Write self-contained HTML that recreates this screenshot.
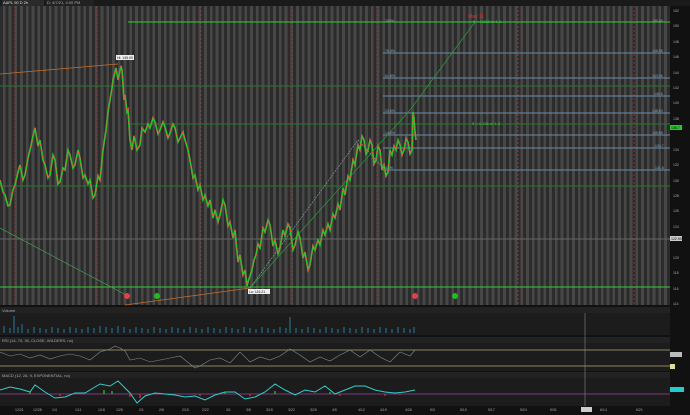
<!DOCTYPE html>
<html><head><meta charset="utf-8"><style>
*{margin:0;padding:0;box-sizing:border-box}
body{width:690px;height:415px;background:#111;overflow:hidden;font-family:"Liberation Sans",sans-serif;position:relative}
.abs{position:absolute}
.stripes{background:repeating-linear-gradient(90deg,#2b2b2b 0,#2b2b2b 3px,#474747 3px,#474747 5.75px)}
</style></head><body>
<div class="abs" style="left:0;top:0;width:690px;height:6px;background:#1a1a1a"></div>
<div class="abs" style="left:2px;top:0;width:42px;height:6px;background:#2a2a2a;color:#ddd;font-size:4px;line-height:6px;padding-left:1px">AAPL 90 D 2h [NASDAQ]</div>
<div class="abs" style="left:46px;top:0;width:48px;height:6px;background:#222;color:#aaa;font-size:4px;line-height:6px;padding-left:1px">D: 4/7/21, 4:00 PM</div>
<div class="abs stripes" style="left:0;top:6px;width:670px;height:299px"></div>
<div class="abs" style="left:670px;top:6px;width:20px;height:409px;background:#111"></div>
<svg class="abs" style="left:0;top:0" width="690" height="415">
<defs>
<polyline id="p" points="0,180 3,192 5,195 8,206 10,205 13,190 15,185 18,172 20,165 23,180 25,175 28,158 30,150 33,136 35,128 38,146 40,140 43,160 45,165 48,178 50,175 53,155 55,160 58,184 60,182 63,168 65,170 68,150 70,155 73,168 75,165 78,150 80,158 83,178 85,175 88,184 90,180 93,198 95,195 98,176 100,180 103,150 106,130 108,112 110,100 112,88 113,80 115,72 116,68 118,80 119,75 121,66 122,70 124,100 125,95 127,112 128,110 130,140 132,150 134,136 135,140 137,150 140,145 142,128 145,132 148,124 150,128 153,118 155,122 158,134 160,130 163,122 165,127 168,138 170,133 173,124 175,128 178,142 180,138 183,132 185,140 188,150 190,160 193,178 195,175 198,190 200,185 203,200 205,195 208,206 210,200 213,218 215,210 218,222 220,215 223,200 225,205 228,226 230,222 233,238 235,230 238,262 240,255 243,275 245,270 247,286 248,282 250,276 252,270 254,260 256,255 258,244 260,248 263,228 265,232 268,220 270,225 273,246 275,240 278,254 280,248 283,230 285,236 288,224 290,228 293,250 295,245 298,232 300,238 303,258 305,252 308,270 310,265 313,246 315,250 318,240 320,245 323,230 325,235 328,224 330,230 333,214 335,218 338,204 340,210 343,188 345,195 348,176 350,180 353,160 355,165 358,145 360,150 362,136 364,140 366,154 368,150 370,140 372,145 374,164 376,160 378,146 380,150 382,170 384,165 386,176 388,172 390,150 392,155 394,146 396,150 398,140 400,145 402,155 404,150 406,138 408,142 410,154 412,150 413,112 414,118 415,132 416,140"/>
</defs>
<g stroke="#b33" stroke-dasharray="2,2" stroke-width="0.7">
<line x1="15" y1="6" x2="15" y2="305"/><line x1="97" y1="6" x2="97" y2="305"/><line x1="201" y1="6" x2="201" y2="305"/><line x1="291" y1="6" x2="291" y2="305"/><line x1="377" y1="6" x2="377" y2="305"/><line x1="518" y1="6" x2="518" y2="305"/><line x1="634" y1="6" x2="634" y2="305"/>
</g>
<g stroke-width="1">
<line x1="128" y1="22" x2="670" y2="22" stroke="#3c3"/>
<line x1="0" y1="86" x2="670" y2="86" stroke="#2a7a2a"/>
<line x1="130" y1="124" x2="670" y2="124" stroke="#2a7a2a"/>
<line x1="0" y1="186" x2="670" y2="186" stroke="#2a7a2a"/>
<line x1="0" y1="287" x2="670" y2="287" stroke="#3c3"/>
<line x1="0" y1="239" x2="670" y2="239" stroke="#666"/>
</g>
<g stroke="#6a8eaa" stroke-width="0.9">
<line x1="383" y1="53" x2="670" y2="53"/><line x1="383" y1="78" x2="670" y2="78"/><line x1="383" y1="96" x2="670" y2="96"/><line x1="383" y1="113" x2="670" y2="113"/><line x1="383" y1="135" x2="670" y2="135"/><line x1="383" y1="148" x2="670" y2="148"/><line x1="383" y1="170" x2="670" y2="170"/>
</g>
<polyline points="0,74 118,64" stroke="#c8702a" fill="none" stroke-width="0.8"/>
<polyline points="0,228 128,296" stroke="#4a5" fill="none" stroke-width="0.6"/>
<polyline points="125,305 250,288" stroke="#c8702a" fill="none" stroke-width="0.8"/>
<polyline points="250,288 410,110 475,22" stroke="#2a9a3a" fill="none" stroke-width="0.7"/>
<polyline points="250,288 358,140 385,170" stroke="#8aa" fill="none" stroke-width="0.6" stroke-dasharray="2,1"/>
<g fill="none" stroke-width="1.6">
<use href="#p" stroke="#2c2"/>
<use href="#p" stroke="#d55" stroke-dasharray="2,4"/>
</g>
<rect x="116" y="55" width="18" height="5" fill="#eee"/>
<rect x="248" y="289" width="22" height="5" fill="#eee"/>
<text x="117" y="59" font-size="3.5" fill="#111">Hi: 145.09</text>
<text x="249" y="293" font-size="3.5" fill="#111">Lo: 116.21</text>
<text x="468" y="18" font-size="5" fill="#d33">May 11</text>
<text x="473" y="23" font-size="4" fill="#3c3">5 = 0.382 of 1-3</text>
<text x="472" y="125" font-size="4" fill="#3c3">5 = 0.236 of 1-3</text>
<circle cx="127" cy="296" r="3" fill="#d44"/><circle cx="415" cy="296" r="3" fill="#d44"/>
<circle cx="157" cy="296" r="3" fill="#2b2"/><circle cx="455" cy="296" r="3" fill="#2b2"/>
<g font-size="3.5" fill="#8ab">
<text x="652" y="22">150.49</text><text x="652" y="52">146.58</text><text x="652" y="77">143.56</text><text x="654" y="95">140.6</text><text x="652" y="112">138.63</text><text x="652" y="134">135.65</text><text x="655" y="147">134.7</text><text x="655" y="169">131.8</text>
<text x="385" y="22">100%</text><text x="385" y="52">76.4%</text><text x="385" y="77">61.8%</text><text x="385" y="112">23.6%</text><text x="385" y="134">14.6%</text><text x="385" y="169">0.0%</text>
</g>
<g font-size="3.5" fill="#aaa">
<text x="673" y="12">152</text><text x="673" y="27">150</text><text x="673" y="43">148</text><text x="673" y="58">146</text><text x="673" y="74">144</text><text x="673" y="89">142</text><text x="673" y="104">140</text><text x="673" y="120">138</text><text x="673" y="151">134</text><text x="673" y="166">132</text><text x="673" y="182">130</text><text x="673" y="197">128</text><text x="673" y="212">126</text><text x="673" y="228">124</text><text x="673" y="259">120</text><text x="673" y="274">118</text><text x="673" y="290">116</text><text x="673" y="305">114</text>
</g>
<rect x="670" y="125" width="12" height="5" fill="#2c2"/><text x="671" y="129" font-size="3.5" fill="#000">136.7</text>
<rect x="670" y="236" width="12" height="5" fill="#ccc"/><text x="671" y="240" font-size="3.5" fill="#000">122.90</text>
<rect x="0" y="307" width="670" height="6" fill="#222"/>
<rect x="0" y="313" width="670" height="22" fill="#1c1c1c"/>
<rect x="0" y="337" width="670" height="6" fill="#222"/>
<rect x="0" y="343" width="670" height="28" fill="#1c1c1c"/>
<rect x="0" y="372" width="670" height="6" fill="#222"/>
<rect x="0" y="378" width="670" height="28" fill="#1c1c1c"/>
<text x="2" y="312" font-size="4" fill="#aaa">Volume</text>
<text x="2" y="342" font-size="4" fill="#aaa">RSI (14, 70, 30, CLOSE, WILDERS, no)</text>
<text x="2" y="377" font-size="4" fill="#aaa">MACD (12, 26, 9, EXPONENTIAL, no)</text>
<g stroke="#2a7a9a" stroke-width="1">
<path d="M4 333V326M10 333V328M14 333V316M18 333V327M22 333V324M28 333V329M34 333V327M40 333V328M46 333V329M52 333V327M58 333V328M64 333V329M70 333V327M76 333V328M82 333V329M88 333V327M94 333V328M100 333V326M106 333V327M112 333V328M118 333V326M124 333V327M130 333V329M136 333V327M142 333V328M148 333V329M154 333V327M160 333V328M166 333V329M172 333V327M178 333V328M184 333V329M190 333V327M196 333V328M202 333V329M208 333V327M214 333V328M220 333V329M226 333V327M232 333V328M238 333V329M244 333V327M250 333V328M256 333V329M262 333V327M268 333V328M274 333V329M280 333V327M286 333V328M290 333V317M296 333V328M302 333V329M308 333V327M314 333V328M320 333V329M326 333V327M332 333V328M338 333V329M344 333V327M350 333V328M356 333V329M362 333V327M368 333V328M374 333V329M380 333V327M386 333V328M392 333V329M398 333V327M404 333V328M410 333V329M414 333V327"/>
</g>
<line x1="0" y1="350" x2="670" y2="350" stroke="#8a8460" stroke-width="1"/>
<line x1="0" y1="366" x2="670" y2="366" stroke="#8a8460" stroke-width="1"/>
<polyline fill="none" stroke="#888" stroke-width="0.6" points="0,352 10,356 20,354 30,358 40,355 50,359 60,356 70,354 80,356 90,360 100,352 110,349 115,346 120,348 125,351 130,360 140,358 150,362 160,360 170,358 180,356 190,364 195,368 200,366 210,360 220,358 230,363 240,352 250,362 260,357 270,360 280,356 290,349 300,355 310,362 320,357 330,361 340,355 350,350 360,357 370,350 380,357 390,362 400,352 410,356 415,350"/>
<line x1="0" y1="394" x2="670" y2="394" stroke="#7a3a7a" stroke-width="1"/>
<polyline fill="none" stroke="#3cc" stroke-width="1" points="0,390 10,387 20,389 30,392 35,385 45,392 55,398 65,397 75,393 85,393 100,384 110,386 118,381 125,388 130,393 137,403 145,396 155,393 165,394 175,395 185,397 195,396 205,400 215,395 225,392 235,392 245,399 255,397 265,392 275,384 285,390 295,395 305,390 315,392 325,386 335,394 345,390 355,386 365,386 375,390 385,392 395,393 405,392 415,390"/>
<g stroke="#2c2" stroke-width="1.2"><path d="M30 394V392M104 394V390M112 394V391M225 394V392M275 394V391M330 394V392"/></g>
<g stroke="#d33" stroke-width="1.2"><path d="M60 394V396M130 394V397M140 394V398M200 394V396M250 394V396M340 394V396M385 394V396M400 394V395"/></g>
<rect x="670" y="352" width="12" height="5" fill="#bbb"/>
<rect x="670" y="364" width="5" height="5" fill="#dd9"/>
<rect x="670" y="387" width="14" height="5" fill="#2cc"/>
<line x1="585" y1="313" x2="585" y2="406" stroke="#888" stroke-width="0.6"/>
<rect x="0" y="406" width="670" height="9" fill="#111"/>
<g font-size="3.5" fill="#aaa">
<text x="15" y="411">12/21</text><text x="33" y="411">12/28</text><text x="52" y="411">1/4</text><text x="75" y="411">1/11</text><text x="98" y="411">1/18</text><text x="116" y="411">1/25</text><text x="139" y="411">2/1</text><text x="159" y="411">2/8</text><text x="182" y="411">2/15</text><text x="202" y="411">2/22</text><text x="226" y="411">3/1</text><text x="246" y="411">3/8</text><text x="266" y="411">3/15</text><text x="288" y="411">3/22</text><text x="310" y="411">3/29</text><text x="332" y="411">4/5</text><text x="358" y="411">4/12</text><text x="380" y="411">4/19</text><text x="405" y="411">4/26</text><text x="430" y="411">5/3</text><text x="460" y="411">5/10</text><text x="488" y="411">5/17</text><text x="520" y="411">5/24</text><text x="550" y="411">5/31</text><text x="600" y="411">6/14</text><text x="636" y="411">6/21</text>
</g>
<rect x="581" y="407" width="11" height="5" fill="#ccc"/>
</svg>
</body></html>
